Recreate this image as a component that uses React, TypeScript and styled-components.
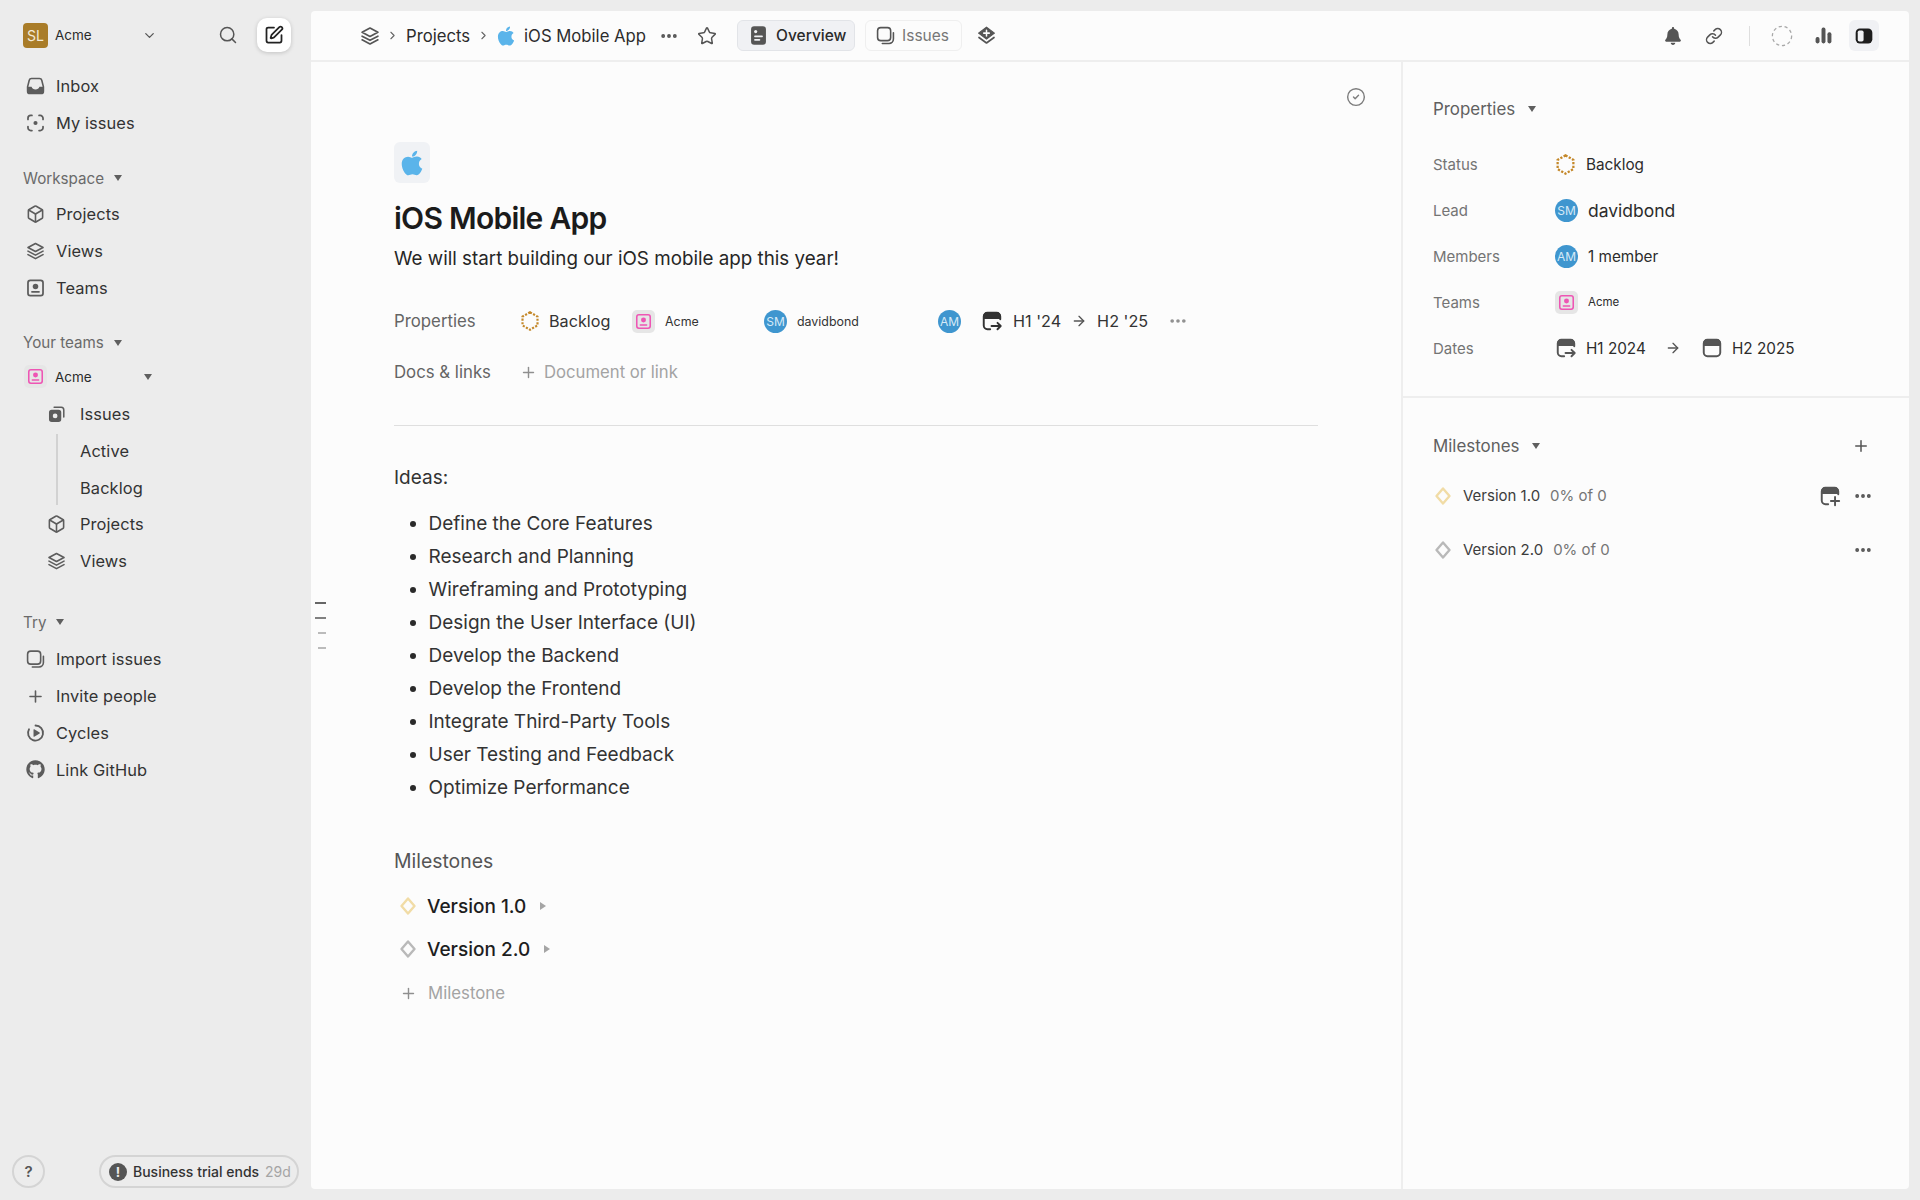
import React from 'react';
import styled, { createGlobalStyle } from 'styled-components';
import { Search, SquarePen, ChevronDown, ChevronRight, Star, Link as LinkIcon, Plus, Box, CircleCheck, Ellipsis, ArrowRight } from 'lucide-react';
import { FaApple, FaGithub, FaBell } from 'react-icons/fa';

const GlobalStyle = createGlobalStyle`
  html, body { margin: 0; padding: 0; height: 100%; background: #ececec; }
  body { font-family: Inter, "Noto Sans", sans-serif; color: #2a2a2a; -webkit-font-smoothing: antialiased; }
  * { box-sizing: border-box; }
`;

const Shell = styled.div`
  display: grid;
  grid-template-columns: 311px 1fr;
  width: 1920px;
  height: 1200px;
  padding-right: 11px;
  background: #ececec;
`;

/* ---------- sidebar ---------- */

const Sidebar = styled.aside`
  display: flex;
  flex-direction: column;
  height: 1200px;
  padding: 18px 12px 12px 0;
`;

const SideTop = styled.div`
  display: flex;
  align-items: center;
  height: 34px;
  padding-left: 23px;
  margin-bottom: 16px;
`;

const Logo = styled.div`
  width: 25px;
  height: 25px;
  border-radius: 4px;
  background: #a97c28;
  color: #f4ead6;
  font-size: 14px;
  display: flex;
  align-items: center;
  justify-content: center;
`;

const WorkspaceName = styled.span`
  font-size: 13.5px;
  margin-left: 7px;
  width: 87px;
  color: #2a2a2a;
`;

const TopTool = styled.div<{ $left?: number }>`
  display: flex;
  align-items: center;
  justify-content: center;
  margin-left: ${(p) => p.$left ?? 0}px;
  color: #555;
`;

const ComposeButton = styled.div`
  width: 34px;
  height: 34px;
  margin-left: 19px;
  border-radius: 10px;
  background: #fff;
  box-shadow: 0 1px 4px rgba(0, 0, 0, 0.18);
  display: flex;
  align-items: center;
  justify-content: center;
  color: #222;
`;

const NavIcon = styled.span`
  width: 19px;
  height: 19px;
  margin-right: 11px;
  display: flex;
  align-items: center;
  justify-content: center;
  color: #5c5c5c;
`;

const NavRow = styled.div<{ $indent?: boolean }>`
  display: flex;
  align-items: center;
  height: 36.75px;
  padding-left: ${(p) => (p.$indent ? 47 : 26)}px;
  font-size: 16.4px;
  letter-spacing: 0.1px;
  color: #333;
  ${NavIcon} {
    margin-right: ${(p) => (p.$indent ? 14 : 11)}px;
  }
`;

const SubGroup = styled.div`
  position: relative;
  &::before {
    content: '';
    position: absolute;
    left: 56px;
    top: 1px;
    bottom: 1px;
    width: 2px;
    background: #d2d2d2;
  }
`;

const SubText = styled.span`
  margin-left: 33px;
`;

const SectionLabel = styled.div<{ $top: number; $bottom: number }>`
  display: flex;
  align-items: center;
  height: 24px;
  margin-top: ${(p) => p.$top}px;
  margin-bottom: ${(p) => p.$bottom}px;
  padding-left: 23px;
  font-size: 15.2px;
  color: #6a6a6a;
`;

const Caret = styled.span<{ $gap?: number; $right?: boolean; $color?: string }>`
  display: inline-block;
  margin-left: ${(p) => p.$gap ?? 10}px;
  width: 0;
  height: 0;
  ${(p) =>
    p.$right
      ? `border-top: 4px solid transparent; border-bottom: 4px solid transparent; border-left: 6px solid ${p.$color ?? '#a5a5a5'};`
      : `border-left: 4px solid transparent; border-right: 4px solid transparent; border-top: 6px solid ${p.$color ?? '#5f5f5f'};`}
`;

const TeamRow = styled.div`
  display: flex;
  align-items: center;
  height: 34px;
  padding-left: 24px;
  margin-bottom: 2px;
  font-size: 13.5px;
  color: #2a2a2a;
`;

const TeamTile = styled.span`
  width: 23px;
  height: 23px;
  border-radius: 5px;
  background: #e6e6e6;
  color: #ee55b4;
  display: flex;
  align-items: center;
  justify-content: center;
  flex-shrink: 0;
`;

const TeamName = styled.span`
  margin-left: 8px;
  width: 89px;
`;

const SideFooter = styled.div`
  margin-top: auto;
  display: flex;
  align-items: center;
  padding-left: 12px;
  padding-bottom: 0;
`;

const HelpButton = styled.div`
  width: 33px;
  height: 33px;
  border-radius: 50%;
  border: 2px solid #d4d4d4;
  color: #555;
  font-size: 15px;
  font-weight: 600;
  display: flex;
  align-items: center;
  justify-content: center;
`;

const TrialPill = styled.div`
  margin-left: 54px;
  width: 200px;
  height: 33px;
  border-radius: 17px;
  border: 2px solid #d4d4d4;
  display: flex;
  align-items: center;
  padding-left: 8px;
  font-size: 14px;
  font-weight: 500;
  color: #333;
`;

const AlertDot = styled.span`
  width: 18px;
  height: 18px;
  border-radius: 50%;
  background: #555;
  color: #ececec;
  font-size: 13px;
  font-weight: 700;
  display: flex;
  align-items: center;
  justify-content: center;
  margin-right: 6px;
`;

const TrialDays = styled.span`
  margin-left: 6px;
  font-weight: 400;
  color: #a5a5a5;
`;

/* ---------- main panel ---------- */

const Panel = styled.main`
  position: relative;
  display: flex;
  flex-direction: column;
  margin-top: 11px;
  height: 1178px;
  background: #fcfcfc;
  border-radius: 4px;
  overflow: hidden;
`;

const Header = styled.header`
  display: flex;
  align-items: center;
  flex-shrink: 0;
  height: 51px;
  padding-left: 49px;
  padding-right: 30px;
  border-bottom: 2px solid #eeeeee;
  font-size: 16.7px;
  color: #2c2c2c;
`;

const HeaderIcon = styled.span<{ $left?: number; $color?: string }>`
  display: flex;
  align-items: center;
  justify-content: center;
  margin-left: ${(p) => p.$left ?? 0}px;
  color: ${(p) => p.$color ?? '#555'};
`;

const Crumb = styled.span<{ $left: number }>`
  margin-left: ${(p) => p.$left}px;
  white-space: nowrap;
`;

const Tab = styled.div<{ $active?: boolean; $width: number; $left: number }>`
  display: flex;
  align-items: center;
  width: ${(p) => p.$width}px;
  height: 31px;
  margin-left: ${(p) => p.$left}px;
  padding-left: 10px;
  border-radius: 6px;
  border: 1px solid ${(p) => (p.$active ? '#e2e4e8' : '#efefef')};
  background: ${(p) => (p.$active ? '#f0f1f4' : 'transparent')};
  color: ${(p) => (p.$active ? '#2a2a2a' : '#777')};
  font-size: 15.5px;
  font-weight: ${(p) => (p.$active ? 500 : 400)};
`;

const TabLabel = styled.span`
  margin-left: 7px;
`;

const HeaderRight = styled.div`
  margin-left: auto;
  display: flex;
  align-items: center;
`;

const HeaderRule = styled.span`
  width: 1px;
  height: 20px;
  margin-left: 26px;
  background: #dedede;
`;

const PanelToggle = styled.div`
  width: 30px;
  height: 31px;
  margin-left: 16px;
  border-radius: 6px;
  background: #f0f1f4;
  display: flex;
  align-items: center;
  justify-content: center;
`;

const Body = styled.div`
  flex: 1;
  display: grid;
  grid-template-columns: 1090px 1fr;
  min-height: 0;
`;

const Doc = styled.section`
  padding: 25px 83px 0 83px;
`;

const DocTool = styled.div`
  display: flex;
  justify-content: flex-end;
  height: 20px;
  margin-right: -48px;
  color: #7d7d7d;
`;

const ProjectTile = styled.div`
  width: 36px;
  height: 41px;
  margin-top: 35px;
  border-radius: 6px;
  background: #f0f2f5;
  color: #5ab4ea;
  display: flex;
  align-items: center;
  justify-content: center;
`;

const Title = styled.h1`
  margin: 15px 0 0;
  height: 40px;
  line-height: 40px;
  font-size: 30px;
  font-weight: 600;
  letter-spacing: -0.75px;
  color: #1b1b1b;
`;

const Lede = styled.p`
  margin: 7px 0 0;
  height: 28px;
  line-height: 28px;
  font-size: 18.8px;
  color: #262626;
`;

const MetaRow = styled.div<{ $top: number }>`
  display: flex;
  align-items: center;
  height: 36px;
  margin-top: ${(p) => p.$top}px;
`;

const MetaLabel = styled.span`
  width: 126px;
  flex-shrink: 0;
  font-size: 16.8px;
  color: #656565;
`;

const Chip = styled.div<{ $width?: number }>`
  display: flex;
  align-items: center;
  ${(p) => (p.$width ? `width: ${p.$width}px;` : '')}
  flex-shrink: 0;
  font-size: 16px;
  color: #333;
`;

const ChipText = styled.span<{ $left?: number; $small?: boolean }>`
  margin-left: ${(p) => p.$left ?? 10}px;
  font-size: ${(p) => (p.$small ? 12.4 : 16.2)}px;
  white-space: nowrap;
`;

const Avatar = styled.span`
  width: 23px;
  height: 23px;
  border-radius: 50%;
  background: #3f96cf;
  color: #d6eaf7;
  font-size: 12px;
  display: flex;
  align-items: center;
  justify-content: center;
  flex-shrink: 0;
`;

const AddLink = styled.span`
  display: flex;
  align-items: center;
  font-size: 16.7px;
  color: #a3a3a3;
`;

const AddIcon = styled.span<{ $left: number; $right: number }>`
  display: flex;
  margin-left: ${(p) => p.$left}px;
  margin-right: ${(p) => p.$right}px;
  color: #8f8f8f;
`;

const Divider = styled.hr`
  margin: 35px 0 0;
  height: 1px;
  border: 0;
  background: #dfdfdf;
`;

const Ideas = styled.p`
  margin: 39px 0 0;
  height: 26px;
  line-height: 26px;
  font-size: 19px;
  color: #333;
`;

const IdeaList = styled.ul`
  margin: 16px 0 0;
  padding: 0 0 0 34.5px;
  list-style: none;
`;

const IdeaItem = styled.li`
  position: relative;
  height: 33.05px;
  line-height: 33.05px;
  font-size: 19px;
  color: #333;
  &::before {
    content: '';
    position: absolute;
    left: -19px;
    top: 14px;
    width: 6px;
    height: 6px;
    border-radius: 50%;
    background: #2a2a2a;
  }
`;

const DocMilestones = styled.h2`
  margin: 44px 0 0;
  height: 26px;
  line-height: 26px;
  font-size: 19.4px;
  font-weight: 400;
  color: #555;
`;

const VersionRow = styled.div<{ $top: number }>`
  display: flex;
  align-items: center;
  height: 30px;
  margin-top: ${(p) => p.$top}px;
  padding-left: 4px;
  font-size: 19px;
  font-weight: 450;
  color: #1e1e1e;
`;

const VersionName = styled.span`
  margin-left: 9px;
`;

const MilestoneAdd = styled.div`
  display: flex;
  align-items: center;
  height: 30px;
  margin-top: 14px;
  padding-left: 5px;
  font-size: 16.8px;
  color: #a3a3a3;
`;

const Aside = styled.aside`
  border-left: 2px solid #eeeeee;
`;

const AsideTop = styled.div`
  height: 336px;
  padding: 35px 0 0 30px;
  border-bottom: 2px solid #eeeeee;
`;

const AsideHeading = styled.div`
  display: flex;
  align-items: center;
  height: 24px;
  font-size: 16.9px;
  color: #606060;
`;

const PropRow = styled.div<{ $first?: boolean }>`
  display: flex;
  align-items: center;
  height: 46px;
  margin-top: ${(p) => (p.$first ? 20 : 0)}px;
`;

const PropLabel = styled.span`
  width: 122px;
  font-size: 15px;
  color: #747474;
  flex-shrink: 0;
`;

const PropValue = styled.span<{ $big?: boolean; $small?: boolean; $left?: number; $width?: number }>`
  margin-left: ${(p) => p.$left ?? 10}px;
  font-size: ${(p) => (p.$big ? 17.5 : p.$small ? 11.5 : 15.3)}px;
  color: #2c2c2c;
  white-space: nowrap;
  ${(p) => (p.$width ? `width: ${p.$width}px;` : '')}
`;

const AsideBottom = styled.div`
  padding: 36px 39px 0 30px;
`;

const HeadingAction = styled.span`
  margin-left: auto;
  display: flex;
  color: #555;
`;

const MilestoneLine = styled.div<{ $top: number }>`
  display: flex;
  align-items: center;
  height: 30px;
  margin-top: ${(p) => p.$top}px;
  font-size: 15px;
  color: #3c3c3c;
`;

const MilestoneName = styled.span`
  margin-left: 10px;
`;

const MilestoneStat = styled.span`
  margin-left: 10px;
  color: #757575;
`;

const LineActions = styled.span`
  margin-left: auto;
  margin-right: -3px;
  display: flex;
  align-items: center;
  gap: 12px;
  color: #555;
`;

const OutlineMarks = styled.div`
  position: absolute;
  left: 4px;
  top: 590.5px;
  display: flex;
  flex-direction: column;
  align-items: flex-end;
  width: 11px;
  gap: 13.3px;
`;

const OutlineMark = styled.span<{ $short?: boolean; $color: string }>`
  display: block;
  height: 2px;
  width: ${(p) => (p.$short ? 8 : 11)}px;
  background: ${(p) => p.$color};
`;

/* ---------- drawn icons ---------- */

type IconProps = { size?: number };

const LayersGlyph: React.FC<IconProps> = ({ size = 20 }) => (
  <svg width={size} height={size} viewBox="0 0 24 24" fill="none" stroke="currentColor" strokeWidth="2" strokeLinejoin="round" strokeLinecap="round">
    <path d="M12 2.5 21.5 7.6 12 12.6 2.5 7.6Z" />
    <path d="M2.5 12.2 12 17.2 21.5 12.2" />
    <path d="M2.5 16.6 12 21.6 21.5 16.6" />
  </svg>
);

const InboxGlyph: React.FC<IconProps> = ({ size = 20 }) => (
  <svg width={size} height={size} viewBox="0 0 24 24">
    <path d="M7 2.500h10a3 3 0 0 1 2.900 2.300L22 13v5.500a3 3 0 0 1-3 3H5a3 3 0 0 1-3-3V13l2.100-8.200A3 3 0 0 1 7 2.500Z" fill="none" stroke="currentColor" strokeWidth="2" />
    <path d="M2 13h5c.8 2.200 2.600 3.400 5 3.400s4.200-1.200 5-3.400h5v5.500a3 3 0 0 1-3 3H5a3 3 0 0 1-3-3Z" fill="currentColor" />
  </svg>
);

const MyIssuesGlyph: React.FC<IconProps> = ({ size = 20 }) => (
  <svg width={size} height={size} viewBox="0 0 24 24" fill="none" stroke="currentColor" strokeWidth="2.2" strokeLinecap="round">
    <path d="M2.500 7.500V6a3.500 3.500 0 0 1 3.500-3.500h1.500" />
    <path d="M16.500 2.500H18A3.500 3.500 0 0 1 21.500 6v1.500" />
    <path d="M21.500 16.500V18a3.500 3.500 0 0 1-3.500 3.500h-1.500" />
    <path d="M7.500 21.500H6A3.500 3.500 0 0 1 2.500 18v-1.500" />
    <circle cx="12" cy="12" r="2.600" fill="currentColor" stroke="none" />
  </svg>
);

const TeamGlyph: React.FC<IconProps> = ({ size = 20 }) => (
  <svg width={size} height={size} viewBox="0 0 24 24" fill="none">
    <rect x="2.500" y="2.500" width="19" height="19" rx="3" stroke="currentColor" strokeWidth="2.2" />
    <circle cx="12" cy="10" r="3.500" fill="currentColor" />
    <rect x="6.500" y="15.800" width="11" height="2.200" rx="1" fill="currentColor" />
  </svg>
);

const IssuesGlyph: React.FC<IconProps> = ({ size = 19 }) => (
  <svg width={size} height={size} viewBox="0 0 24 24" fill="none">
    <path d="M9 2.800h9a3.500 3.500 0 0 1 3.200 3.500v9" stroke="currentColor" strokeWidth="1.900" strokeLinecap="round" />
    <path fillRule="evenodd" clipRule="evenodd" d="M6 6h8.500A3.500 3.500 0 0 1 18 9.500V18a3.500 3.500 0 0 1-3.500 3.500H6A3.500 3.500 0 0 1 2.500 18V9.500A3.500 3.500 0 0 1 6 6Zm4.250 4.800a3 3 0 1 0 0 6 3 3 0 0 0 0-6Z" fill="currentColor" />
  </svg>
);

const ImportGlyph: React.FC<IconProps> = ({ size = 20 }) => (
  <svg width={size} height={size} viewBox="0 0 24 24" fill="none" stroke="currentColor" strokeWidth="2" strokeLinecap="round">
    <rect x="2" y="2" width="16.500" height="16.500" rx="4" />
    <path d="M22 8.500v8a5.500 5.500 0 0 1-5.500 5.500H8" />
  </svg>
);

const CyclesGlyph: React.FC<IconProps> = ({ size = 20 }) => (
  <svg width={size} height={size} viewBox="0 0 24 24" fill="none">
    <path d="M12 2.500A9.500 9.500 0 1 1 3.800 7.200" stroke="currentColor" strokeWidth="2.300" strokeLinecap="round" />
    <path d="M9.500 7.800v8.400a.6.6 0 0 0 .9.500l6.800-4.200a.6.6 0 0 0 0-1l-6.800-4.200a.6.6 0 0 0-.9.500Z" fill="currentColor" />
  </svg>
);

const OverviewGlyph: React.FC<IconProps> = ({ size = 21 }) => (
  <svg width={size} height={size} viewBox="0 0 24 24">
    <rect x="3.500" y="1.500" width="17" height="21" rx="3.500" fill="currentColor" />
    <circle cx="8.800" cy="7.500" r="1.800" fill="#f0f1f4" />
    <rect x="7" y="12" width="10" height="1.900" rx=".9" fill="#f0f1f4" />
    <rect x="7" y="16" width="7" height="1.900" rx=".9" fill="#f0f1f4" />
  </svg>
);

const StackPlusGlyph: React.FC<IconProps> = ({ size = 18 }) => (
  <svg width={size} height={size} viewBox="0 0 24 24" fill="none">
    <path d="M12 1.500 22 9 12 16.500 2 9Z" fill="currentColor" stroke="currentColor" strokeWidth="1.500" strokeLinejoin="round" />
    <path d="M12 5.500v7M8.500 9h7" stroke="#fcfcfc" strokeWidth="1.900" strokeLinecap="round" />
    <path d="M2.500 14.500 12 21.500l9.500-7" stroke="currentColor" strokeWidth="2.100" strokeLinecap="round" strokeLinejoin="round" />
  </svg>
);

const BarsGlyph: React.FC<IconProps> = ({ size = 19 }) => (
  <svg width={size} height={size} viewBox="0 0 24 24" fill="currentColor">
    <rect x="2" y="14" width="5" height="8" rx="2.300" />
    <rect x="9.500" y="2" width="5" height="20" rx="2.300" />
    <rect x="17" y="8" width="5" height="14" rx="2.300" />
  </svg>
);

const PanelGlyph: React.FC<IconProps> = ({ size = 20 }) => (
  <svg width={size} height={size} viewBox="0 0 24 24">
    <rect x="2" y="3" width="20" height="18" rx="5" fill="#1d1d1d" />
    <rect x="4.500" y="5.500" width="7" height="13" rx="2" fill="#f0f1f4" />
  </svg>
);

const DashedCircle: React.FC<IconProps> = ({ size = 22 }) => (
  <svg width={size} height={size} viewBox="0 0 24 24" fill="none" stroke="#a8a8a8" strokeWidth="1.400" strokeDasharray="3.500 3">
    <circle cx="12" cy="12" r="10.500" />
  </svg>
);

const BacklogGlyph: React.FC<IconProps> = ({ size = 20 }) => (
  <svg width={size} height={size} viewBox="0 0 24 24" fill="none" stroke="#c4882a" strokeWidth="2.600" strokeDasharray="2.600 1.700">
    <path d="M12 1.500 21 6.750v10.500L12 22.500l-9-5.250V6.750Z" />
  </svg>
);

const DateGlyph: React.FC<IconProps & { mark?: 'arrow' | 'plus' | 'none' }> = ({ size = 22, mark = 'none' }) => (
  <svg width={size} height={size} viewBox="0 0 24 24" fill="none">
    {mark === 'none' ? (
      <rect x="3" y="3" width="18" height="18" rx="4" stroke="currentColor" strokeWidth="2.100" />
    ) : (
      <path d="M21 10V7a4 4 0 0 0-4-4H7a4 4 0 0 0-4 4v10a4 4 0 0 0 4 4h3" stroke="currentColor" strokeWidth="2.100" strokeLinecap="round" />
    )}
    <path d="M3 9V7a4 4 0 0 1 4-4h10a4 4 0 0 1 4 4v2Z" fill="currentColor" stroke="currentColor" strokeWidth="1.500" />
    {mark === 'arrow' && <path d="M11.500 17.500H21M18 14l3.500 3.500L18 21" stroke="currentColor" strokeWidth="2.100" strokeLinecap="round" strokeLinejoin="round" />}
    {mark === 'plus' && <path d="M13 17.500h9M17.500 13v9" stroke="currentColor" strokeWidth="2.100" strokeLinecap="round" />}
  </svg>
);

const MilestoneGlyph: React.FC<{ color: string }> = ({ color }) => (
  <svg width="20" height="20" viewBox="0 0 20 20" fill="none" stroke={color} strokeWidth="2.400" strokeLinejoin="round">
    <path d="M10 2.500 16.500 10 10 17.500 3.500 10Z" />
  </svg>
);

const ideas = [
  'Define the Core Features',
  'Research and Planning',
  'Wireframing and Prototyping',
  'Design the User Interface (UI)',
  'Develop the Backend',
  'Develop the Frontend',
  'Integrate Third-Party Tools',
  'User Testing and Feedback',
  'Optimize Performance',
];

const App: React.FC = () => {
  return (
    <>
      <GlobalStyle />
      <Shell>
        <Sidebar>
          <SideTop>
            <Logo>SL</Logo>
            <WorkspaceName>Acme</WorkspaceName>
            <TopTool><ChevronDown size={15} strokeWidth={2} /></TopTool>
            <TopTool $left={61}><Search size={20} strokeWidth={1.8} /></TopTool>
            <ComposeButton><SquarePen size={20} strokeWidth={2.1} /></ComposeButton>
          </SideTop>

          <NavRow><NavIcon><InboxGlyph /></NavIcon>Inbox</NavRow>
          <NavRow><NavIcon><MyIssuesGlyph /></NavIcon>My issues</NavRow>

          <SectionLabel $top={24.5} $bottom={6}>Workspace<Caret /></SectionLabel>
          <NavRow><NavIcon><Box size={20} strokeWidth={2} /></NavIcon>Projects</NavRow>
          <NavRow><NavIcon><LayersGlyph /></NavIcon>Views</NavRow>
          <NavRow><NavIcon><TeamGlyph /></NavIcon>Teams</NavRow>

          <SectionLabel $top={24.5} $bottom={5}>Your teams<Caret /></SectionLabel>
          <TeamRow>
            <TeamTile><TeamGlyph size={17} /></TeamTile>
            <TeamName>Acme</TeamName>
            <Caret $gap={0} />
          </TeamRow>
          <NavRow $indent><NavIcon><IssuesGlyph /></NavIcon>Issues</NavRow>
          <SubGroup>
            <NavRow $indent><SubText>Active</SubText></NavRow>
            <NavRow $indent><SubText>Backlog</SubText></NavRow>
          </SubGroup>
          <NavRow $indent><NavIcon><Box size={20} strokeWidth={2} /></NavIcon>Projects</NavRow>
          <NavRow $indent><NavIcon><LayersGlyph /></NavIcon>Views</NavRow>

          <SectionLabel $top={30.5} $bottom={7}>Try<Caret /></SectionLabel>
          <NavRow><NavIcon><ImportGlyph /></NavIcon>Import issues</NavRow>
          <NavRow><NavIcon><Plus size={19} strokeWidth={2} /></NavIcon>Invite people</NavRow>
          <NavRow><NavIcon><CyclesGlyph /></NavIcon>Cycles</NavRow>
          <NavRow><NavIcon><FaGithub size={19} /></NavIcon>Link GitHub</NavRow>

          <SideFooter>
            <HelpButton>?</HelpButton>
            <TrialPill>
              <AlertDot>!</AlertDot>
              Business trial ends
              <TrialDays>29d</TrialDays>
            </TrialPill>
          </SideFooter>
        </Sidebar>

        <Panel>
          <Header>
            <HeaderIcon><LayersGlyph /></HeaderIcon>
            <HeaderIcon $left={6} $color="#666"><ChevronRight size={13} strokeWidth={2} /></HeaderIcon>
            <Crumb $left={7}>Projects</Crumb>
            <HeaderIcon $left={6.5} $color="#666"><ChevronRight size={13} strokeWidth={2} /></HeaderIcon>
            <HeaderIcon $left={5.5} $color="#5ab4ea"><FaApple size={22} /></HeaderIcon>
            <Crumb $left={7}>iOS Mobile App</Crumb>
            <HeaderIcon $left={13}><Ellipsis size={20} strokeWidth={2.6} /></HeaderIcon>
            <HeaderIcon $left={18}><Star size={20} strokeWidth={1.8} /></HeaderIcon>
            <Tab $active $width={118} $left={20}>
              <HeaderIcon><OverviewGlyph /></HeaderIcon>
              <TabLabel>Overview</TabLabel>
            </Tab>
            <Tab $width={97} $left={10}>
              <HeaderIcon><ImportGlyph size={19} /></HeaderIcon>
              <TabLabel>Issues</TabLabel>
            </Tab>
            <HeaderIcon $left={15}><StackPlusGlyph size={19} /></HeaderIcon>
            <HeaderRight>
              <HeaderIcon><FaBell size={18} /></HeaderIcon>
              <HeaderIcon $left={23}><LinkIcon size={18} strokeWidth={2} /></HeaderIcon>
              <HeaderRule />
              <HeaderIcon $left={21}><DashedCircle /></HeaderIcon>
              <HeaderIcon $left={21}><BarsGlyph /></HeaderIcon>
              <PanelToggle><PanelGlyph /></PanelToggle>
            </HeaderRight>
          </Header>

          <Body>
            <Doc>
              <DocTool><CircleCheck size={20} strokeWidth={1.7} /></DocTool>
              <ProjectTile><FaApple size={28} /></ProjectTile>
              <Title>iOS Mobile App</Title>
              <Lede>We will start building our iOS mobile app this year!</Lede>

              <MetaRow $top={30}>
                <MetaLabel>Properties</MetaLabel>
                <Chip $width={112}><BacklogGlyph /><ChipText $left={9}>Backlog</ChipText></Chip>
                <Chip $width={132}><TeamTile><TeamGlyph size={17} /></TeamTile><ChipText $small>Acme</ChipText></Chip>
                <Chip $width={174}><Avatar>SM</Avatar><ChipText $small>davidbond</ChipText></Chip>
                <Chip $width={43}><Avatar>AM</Avatar></Chip>
                <Chip>
                  <DateGlyph mark="arrow" />
                  <ChipText $left={10}>H1 &apos;24</ChipText>
                  <HeaderIcon $left={10}><ArrowRight size={16} strokeWidth={2} /></HeaderIcon>
                  <ChipText $left={10}>H2 &apos;25</ChipText>
                  <HeaderIcon $left={20} $color="#8f8f8f"><Ellipsis size={20} strokeWidth={2.4} /></HeaderIcon>
                </Chip>
              </MetaRow>
              <MetaRow $top={15}>
                <MetaLabel>Docs &amp; links</MetaLabel>
                <AddLink>
                  <AddIcon $left={0} $right={7}><Plus size={17} strokeWidth={2} /></AddIcon>
                  Document or link
                </AddLink>
              </MetaRow>

              <Divider />

              <Ideas>Ideas:</Ideas>
              <IdeaList>
                {ideas.map((idea) => (
                  <IdeaItem key={idea}>{idea}</IdeaItem>
                ))}
              </IdeaList>

              <DocMilestones>Milestones</DocMilestones>
              <VersionRow $top={17}>
                <MilestoneGlyph color="#f1dca6" />
                <VersionName>Version 1.0</VersionName>
                <Caret $right $gap={14} />
              </VersionRow>
              <VersionRow $top={13}>
                <MilestoneGlyph color="#b9b9b9" />
                <VersionName>Version 2.0</VersionName>
                <Caret $right $gap={14} />
              </VersionRow>
              <MilestoneAdd>
                <AddIcon $left={1} $right={11}><Plus size={17} strokeWidth={2} /></AddIcon>
                Milestone
              </MilestoneAdd>
            </Doc>

            <Aside>
              <AsideTop>
                <AsideHeading>Properties<Caret $gap={13} /></AsideHeading>
                <PropRow $first>
                  <PropLabel>Status</PropLabel>
                  <BacklogGlyph size={21} />
                  <PropValue>Backlog</PropValue>
                </PropRow>
                <PropRow>
                  <PropLabel>Lead</PropLabel>
                  <Avatar>SM</Avatar>
                  <PropValue $big>davidbond</PropValue>
                </PropRow>
                <PropRow>
                  <PropLabel>Members</PropLabel>
                  <Avatar>AM</Avatar>
                  <PropValue>1 member</PropValue>
                </PropRow>
                <PropRow>
                  <PropLabel>Teams</PropLabel>
                  <TeamTile><TeamGlyph size={17} /></TeamTile>
                  <PropValue $small>Acme</PropValue>
                </PropRow>
                <PropRow>
                  <PropLabel>Dates</PropLabel>
                  <HeaderIcon><DateGlyph mark="arrow" /></HeaderIcon>
                  <PropValue $left={9} $width={79}>H1 2024</PropValue>
                  <HeaderIcon><ArrowRight size={16} strokeWidth={2} /></HeaderIcon>
                  <HeaderIcon $left={20}><DateGlyph /></HeaderIcon>
                  <PropValue $left={9}>H2 2025</PropValue>
                </PropRow>
              </AsideTop>
              <AsideBottom>
                <AsideHeading>
                  Milestones<Caret $gap={13} />
                  <HeadingAction><Plus size={18} strokeWidth={2} /></HeadingAction>
                </AsideHeading>
                <MilestoneLine $top={22.5}>
                  <MilestoneGlyph color="#f1dca6" />
                  <MilestoneName>Version 1.0</MilestoneName>
                  <MilestoneStat>0% of 0</MilestoneStat>
                  <LineActions>
                    <DateGlyph mark="plus" />
                    <Ellipsis size={20} strokeWidth={2.6} />
                  </LineActions>
                </MilestoneLine>
                <MilestoneLine $top={24}>
                  <MilestoneGlyph color="#b9b9b9" />
                  <MilestoneName>Version 2.0</MilestoneName>
                  <MilestoneStat>0% of 0</MilestoneStat>
                  <LineActions>
                    <Ellipsis size={20} strokeWidth={2.6} />
                  </LineActions>
                </MilestoneLine>
              </AsideBottom>
            </Aside>
          </Body>

          <OutlineMarks>
            <OutlineMark $color="#666" />
            <OutlineMark $color="#808080" />
            <OutlineMark $short $color="#bbb" />
            <OutlineMark $short $color="#bbb" />
          </OutlineMarks>
        </Panel>
      </Shell>
    </>
  );
};

export default App;
